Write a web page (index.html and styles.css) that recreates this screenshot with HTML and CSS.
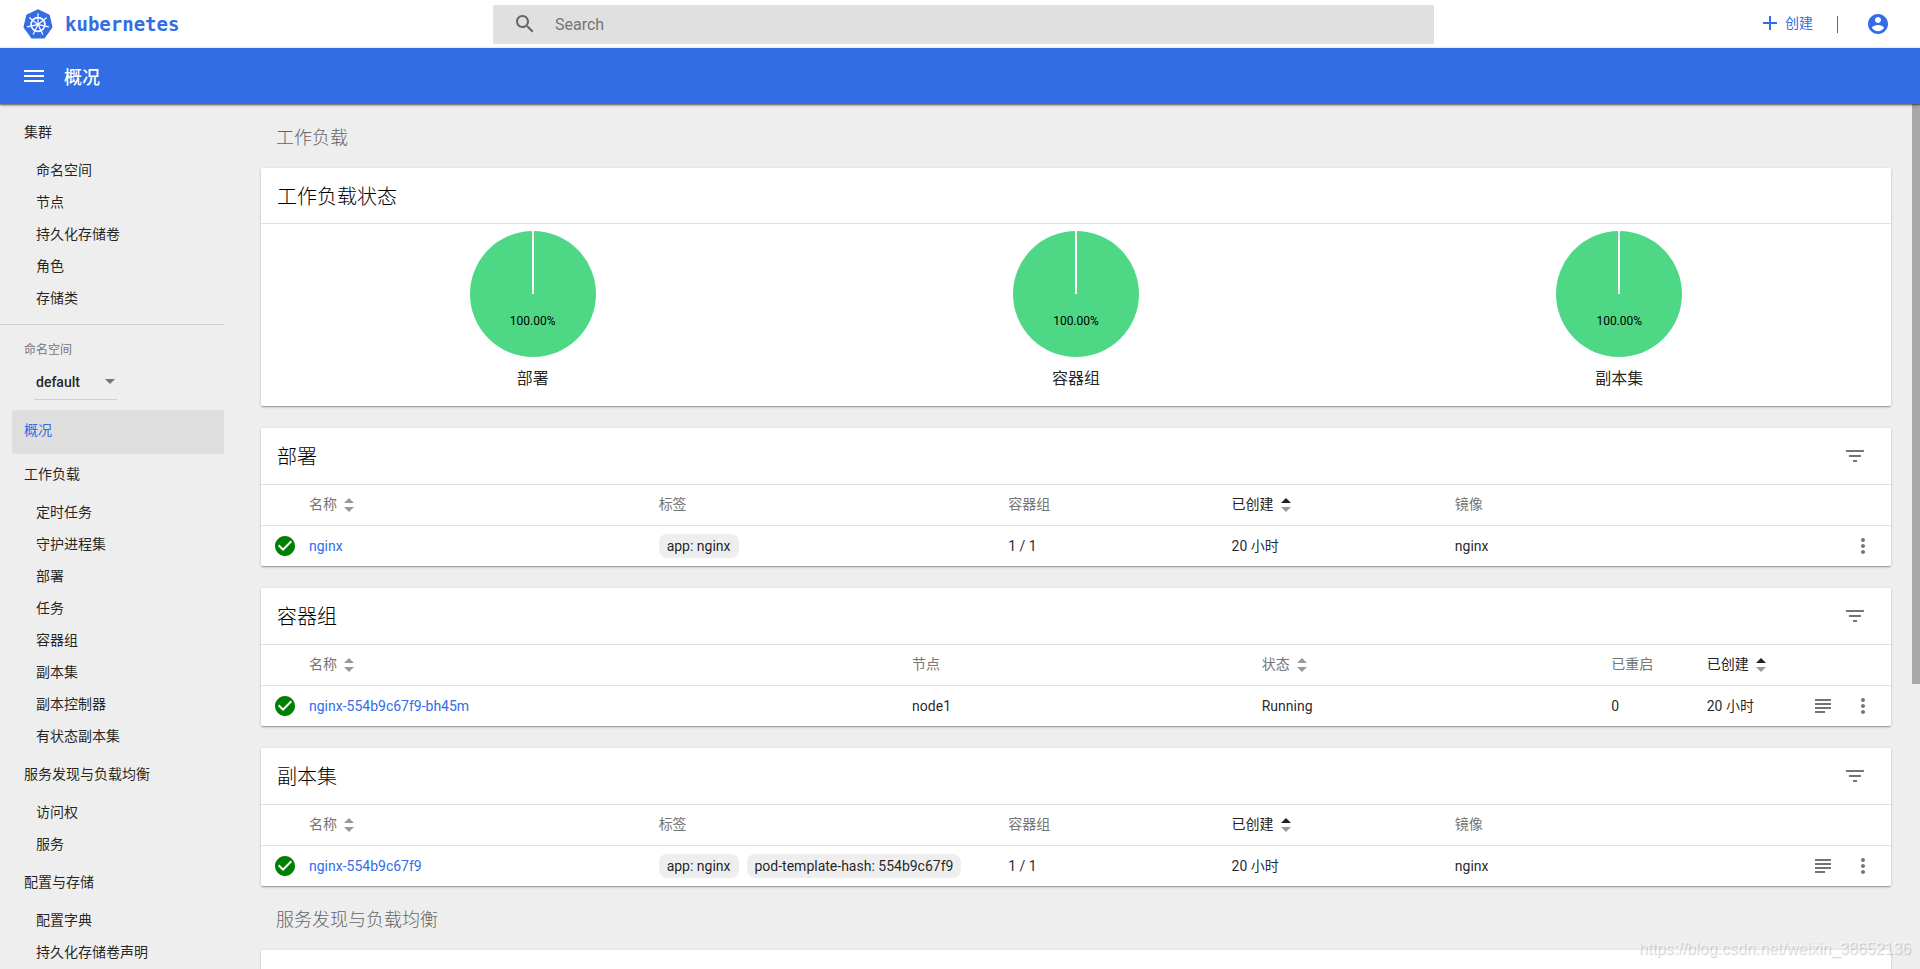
FILE: index.html
```html
<!DOCTYPE html>
<html lang="zh-CN">
<head>
<meta charset="utf-8">
<title>概况 - Kubernetes Dashboard</title>
<link rel="stylesheet" href="styles.css">
</head>
<body>
<svg class="sprite" aria-hidden="true">
  <symbol id="i-check" viewBox="0 0 24 24"><circle cx="12" cy="12" r="8" fill="#fff"/><path d="M12 2C6.480 2 2 6.480 2 12s4.480 10 10 10 10-4.480 10-10S17.520 2 12 2zm-2 15l-5-5 1.410-1.410L10 14.170l7.590-7.590L19 8l-9 9z"/></symbol>
  <symbol id="i-filter" viewBox="0 0 24 24"><path d="M10 18h4v-2h-4v2zM3 6v2h18V6H3zm3 7h12v-2H6v2z"/></symbol>
  <symbol id="i-more" viewBox="0 0 24 24"><path d="M12 8c1.100 0 2-.9 2-2s-.9-2-2-2-2 .9-2 2 .9 2 2 2zm0 2c-1.100 0-2 .9-2 2s.9 2 2 2 2-.9 2-2-.9-2-2-2zm0 6c-1.100 0-2 .9-2 2s.9 2 2 2 2-.9 2-2-.9-2-2-2z"/></symbol>
  <symbol id="i-logs" viewBox="0 0 24 24"><path d="M4 5h16v2H4zM4 9h16v2H4zM4 13h16v2H4zM4 17h10v2H4z"/></symbol>
  <symbol id="i-sort" viewBox="0 0 10 14"><path class="sort-up" d="M0 5L5 0l5 5z"/><path d="M0 9h10l-5 5z"/></symbol>
  <symbol id="i-pie" viewBox="0 0 126 126"><circle cx="63" cy="63" r="63" fill="#4ed886"/><path d="M63 0v63" stroke="#fff" stroke-width="2"/></symbol>
</svg>
<div class="app">
  <header class="topbar">
    <a class="brand" href="#">
      <svg class="brand-logo" viewBox="0 0 30 30" aria-hidden="true">
        <path d="M15 1.500L25.600 6.500 28.300 18 20.900 28.300H9.100L1.700 18 4.400 6.500z" fill="#326de6" stroke="#326de6" stroke-width="2.400" stroke-linejoin="round"/>
        <g fill="none" stroke="#fff" stroke-linecap="round">
          <circle cx="15" cy="15.500" r="6.900" stroke-width="1.700"/>
          <g stroke-width="1.200">
            <path id="spoke" d="M15 13.800V4.700"/>
            <use href="#spoke" transform="rotate(51.430 15 15.500)"/>
            <use href="#spoke" transform="rotate(102.860 15 15.500)"/>
            <use href="#spoke" transform="rotate(154.290 15 15.500)"/>
            <use href="#spoke" transform="rotate(205.710 15 15.500)"/>
            <use href="#spoke" transform="rotate(257.140 15 15.500)"/>
            <use href="#spoke" transform="rotate(308.570 15 15.500)"/>
          </g>
        </g>
        <circle cx="15" cy="15.500" r="1.800" fill="#fff"/>
      </svg>
      <span class="brand-name">kubernetes</span>
    </a>
    <label class="search">
      <svg class="icon" viewBox="0 0 24 24" aria-hidden="true"><path d="M15.500 14h-.79l-.28-.27C15.410 12.590 16 11.110 16 9.500 16 5.910 13.090 3 9.500 3S3 5.910 3 9.500 5.910 16 9.500 16c1.610 0 3.090-.59 4.230-1.570l.27.28v.79l5 4.990L20.490 19l-4.990-5zm-6 0C7.010 14 5 11.990 5 9.500S7.010 5 9.500 5 14 7.010 14 9.500 11.990 14 9.500 14z"/></svg>
      <input class="search-input" type="text" placeholder="Search" aria-label="Search">
    </label>
    <div class="top-actions">
      <button class="create" type="button"><svg viewBox="0 0 14 14" width="14" height="14" aria-hidden="true"><path d="M6 0h2v6h6v2H8v6H6V8H0V6h6z"/></svg>创建</button>
      <span class="top-divider"></span>
      <button class="icon-button account" type="button" aria-label="账户"><svg class="icon" viewBox="0 0 24 24" aria-hidden="true"><path d="M12 2C6.480 2 2 6.480 2 12s4.480 10 10 10 10-4.480 10-10S17.520 2 12 2zm0 3c1.660 0 3 1.340 3 3s-1.340 3-3 3-3-1.340-3-3 1.340-3 3-3zm0 14.200c-2.500 0-4.710-1.280-6-3.220.03-1.990 4-3.080 6-3.080 1.990 0 5.970 1.090 6 3.080-1.290 1.940-3.500 3.220-6 3.220z"/></svg></button>
    </div>
  </header>

  <div class="toolbar">
    <button class="icon-button" type="button" aria-label="菜单"><svg class="menu-icon" viewBox="0 0 20 12" aria-hidden="true"><path d="M0 0h20v2H0zM0 5h20v2H0zM0 10h20v2H0z"/></svg></button>
    <h1 class="page-title">概况</h1>
  </div>

  <div class="body">
    <nav class="sidebar">
      <a class="nav-group" href="#">集群</a>
      <a class="nav-item" href="#">命名空间</a>
      <a class="nav-item" href="#">节点</a>
      <a class="nav-item" href="#">持久化存储卷</a>
      <a class="nav-item" href="#">角色</a>
      <a class="nav-item" href="#">存储类</a>
      <div class="namespace">
        <label class="namespace-label" for="namespace">命名空间</label>
        <div class="select-box">
          <select class="select" id="namespace"><option>default</option></select>
          <svg class="select-arrow" viewBox="0 0 10 5" aria-hidden="true"><path d="M0 0h10L5 5z"/></svg>
        </div>
      </div>
      <a class="nav-group nav-active" href="#">概况</a>
      <a class="nav-group" href="#">工作负载</a>
      <a class="nav-item" href="#">定时任务</a>
      <a class="nav-item" href="#">守护进程集</a>
      <a class="nav-item" href="#">部署</a>
      <a class="nav-item" href="#">任务</a>
      <a class="nav-item" href="#">容器组</a>
      <a class="nav-item" href="#">副本集</a>
      <a class="nav-item" href="#">副本控制器</a>
      <a class="nav-item" href="#">有状态副本集</a>
      <a class="nav-group" href="#">服务发现与负载均衡</a>
      <a class="nav-item" href="#">访问权</a>
      <a class="nav-item" href="#">服务</a>
      <a class="nav-group" href="#">配置与存储</a>
      <a class="nav-item" href="#">配置字典</a>
      <a class="nav-item" href="#">持久化存储卷声明</a>
    </nav>

    <main class="content">
      <h2 class="section-title">工作负载</h2>
      <div class="cards">
        <section class="card">
          <div class="card-head card-head-plain"><h3 class="card-title">工作负载状态</h3></div>
          <div class="charts">
            <figure class="chart"><div class="pie"><svg class="pie-shape" aria-hidden="true"><use href="#i-pie"/></svg><span class="pie-value">100.00%</span></div><figcaption>部署</figcaption></figure>
            <figure class="chart"><div class="pie"><svg class="pie-shape" aria-hidden="true"><use href="#i-pie"/></svg><span class="pie-value">100.00%</span></div><figcaption>容器组</figcaption></figure>
            <figure class="chart"><div class="pie"><svg class="pie-shape" aria-hidden="true"><use href="#i-pie"/></svg><span class="pie-value">100.00%</span></div><figcaption>副本集</figcaption></figure>
          </div>
        </section>

        <section class="card">
          <div class="card-head"><h3 class="card-title">部署</h3><button class="icon-button" type="button" aria-label="筛选"><svg class="icon"><use href="#i-filter"/></svg></button></div>
          <table class="table">
            <colgroup><col class="col-status"><col class="col-l"><col class="col-l"><col class="col-m"><col class="col-m"><col><col class="col-actions"></colgroup>
            <thead><tr><th></th><th>名称<svg class="sort"><use href="#i-sort"/></svg></th><th>标签</th><th>容器组</th><th class="sorted">已创建<svg class="sort"><use href="#i-sort"/></svg></th><th>镜像</th><th></th></tr></thead>
            <tbody><tr><td><svg class="icon status"><use href="#i-check"/></svg></td><td><a class="link" href="#">nginx</a></td><td><span class="chip">app: nginx</span></td><td>1 / 1</td><td>20 小时</td><td>nginx</td><td><div class="row-actions"><button class="icon-button" type="button" aria-label="更多"><svg class="icon"><use href="#i-more"/></svg></button></div></td></tr></tbody>
          </table>
        </section>

        <section class="card">
          <div class="card-head"><h3 class="card-title">容器组</h3><button class="icon-button" type="button" aria-label="筛选"><svg class="icon"><use href="#i-filter"/></svg></button></div>
          <table class="table">
            <colgroup><col class="col-status"><col class="col-xl"><col class="col-l"><col class="col-l"><col class="col-s"><col><col class="col-actions"></colgroup>
            <thead><tr><th></th><th>名称<svg class="sort"><use href="#i-sort"/></svg></th><th>节点</th><th>状态<svg class="sort"><use href="#i-sort"/></svg></th><th>已重启</th><th class="sorted">已创建<svg class="sort"><use href="#i-sort"/></svg></th><th></th></tr></thead>
            <tbody><tr><td><svg class="icon status"><use href="#i-check"/></svg></td><td><a class="link" href="#">nginx-554b9c67f9-bh45m</a></td><td>node1</td><td>Running</td><td>0</td><td>20 小时</td><td><div class="row-actions"><button class="icon-button" type="button" aria-label="日志"><svg class="icon"><use href="#i-logs"/></svg></button><button class="icon-button" type="button" aria-label="更多"><svg class="icon"><use href="#i-more"/></svg></button></div></td></tr></tbody>
          </table>
        </section>

        <section class="card">
          <div class="card-head"><h3 class="card-title">副本集</h3><button class="icon-button" type="button" aria-label="筛选"><svg class="icon"><use href="#i-filter"/></svg></button></div>
          <table class="table">
            <colgroup><col class="col-status"><col class="col-l"><col class="col-l"><col class="col-m"><col class="col-m"><col><col class="col-actions"></colgroup>
            <thead><tr><th></th><th>名称<svg class="sort"><use href="#i-sort"/></svg></th><th>标签</th><th>容器组</th><th class="sorted">已创建<svg class="sort"><use href="#i-sort"/></svg></th><th>镜像</th><th></th></tr></thead>
            <tbody><tr><td><svg class="icon status"><use href="#i-check"/></svg></td><td><a class="link" href="#">nginx-554b9c67f9</a></td><td><span class="chip">app: nginx</span><span class="chip">pod-template-hash: 554b9c67f9</span></td><td>1 / 1</td><td>20 小时</td><td>nginx</td><td><div class="row-actions"><button class="icon-button" type="button" aria-label="日志"><svg class="icon"><use href="#i-logs"/></svg></button><button class="icon-button" type="button" aria-label="更多"><svg class="icon"><use href="#i-more"/></svg></button></div></td></tr></tbody>
          </table>
        </section>
      </div>

      <h2 class="section-title">服务发现与负载均衡</h2>
      <section class="card"><div class="card-head"></div></section>
    </main>
    <div class="scroll-thumb"></div>
  </div>
  <div class="watermark">https://blog.csdn.net/weixin_38652136</div>
</div>
</body>
</html>
```
FILE: styles.css
```css
* { box-sizing: border-box; }

body {
  margin: 0;
  background: #eee;
  color: rgba(0, 0, 0, 0.87);
  font: 14px/20px Roboto, "Noto Sans CJK SC", sans-serif;
}

a { color: inherit; text-decoration: none; }

h1, h2, h3, figure { margin: 0; font-weight: 400; }

button {
  border: 0;
  padding: 0;
  background: none;
  color: inherit;
  font: inherit;
  cursor: pointer;
}

svg { fill: currentColor; flex: none; }

.sprite { position: absolute; width: 0; height: 0; }
.icon { display: block; width: 24px; height: 24px; }
.icon-button { display: flex; align-items: center; justify-content: center; }

.app {
  position: relative;
  display: flex;
  flex-direction: column;
  height: 100vh;
  overflow: hidden;
}

/* Top bar */
.topbar {
  flex: none;
  display: grid;
  grid-template-columns: 493px 49% 1fr;
  align-items: center;
  height: 48px;
  background: #fff;
  color: #326de6;
}

.brand { display: flex; align-items: center; gap: 12px; padding-left: 23px; }
.brand-logo { width: 30px; height: 30px; }
.brand-name { font: 700 19px/24px "DejaVu Sans Mono", monospace; }

.search {
  display: flex;
  align-items: center;
  gap: 18px;
  height: 39px;
  padding-left: 20px;
  border-radius: 2px;
  background: #e0e0e0;
  color: #666;
}

.search-input {
  flex: 1;
  border: 0;
  padding: 2px 0 0;
  outline: 0;
  background: none;
  color: inherit;
  font: 16px/24px Roboto, sans-serif;
}

.search-input::placeholder { color: #757575; }

.top-actions { display: flex; align-items: center; justify-content: flex-end; padding-right: 30px; }
.create { display: flex; align-items: center; gap: 8px; padding-bottom: 2px; }
.top-divider { width: 1px; height: 17px; margin: 0 28px 0 24px; background: #326de6; }

/* Blue toolbar */
.toolbar {
  position: relative;
  z-index: 1;
  flex: none;
  display: flex;
  align-items: center;
  gap: 20px;
  height: 56px;
  padding-left: 24px;
  background: #326de6;
  box-shadow: 0 1px 3px rgba(0, 0, 0, 0.4), 0 1px 1px rgba(0, 0, 0, 0.3);
  color: #fff;
}

.menu-icon { width: 20px; height: 12px; }
.page-title { padding-top: 3px; font-size: 18px; font-weight: 500; line-height: 24px; }

.body { position: relative; flex: 1; display: flex; min-height: 0; }

/* Sidebar */
.sidebar { flex: none; width: 224px; padding-top: 8px; }
.nav-group { display: block; padding: 10px 24px 14px; }
.nav-item { display: block; padding: 4px 36px 8px; }

.nav-active {
  margin-left: 12px;
  padding-left: 12px;
  border-radius: 2px;
  background: #dedede;
  color: #326de6;
}

.namespace {
  height: 86px;
  margin-top: 8px;
  padding: 15px 24px 0;
  border-top: 1px solid #cfcfcf;
}

.namespace-label { display: block; color: #757575; font-size: 12px; line-height: 20px; }

.select-box {
  display: flex;
  align-items: center;
  width: 83px;
  height: 36px;
  margin: 4px 0 0 10px;
  padding: 0 2px;
  border-bottom: 1px solid #cfcfcf;
}

.select {
  flex: 1;
  width: 0;
  border: 0;
  padding: 0;
  appearance: none;
  background: none;
  color: inherit;
  font: 500 14px/20px Roboto, sans-serif;
}

.select-arrow { width: 10px; height: 5px; color: #757575; }

/* Content */
.content { flex: 1; min-width: 0; padding: 0 29px 0 37px; }

.section-title {
  padding: 22px 15px 18px;
  color: #666;
  font-size: 18px;
  font-weight: 300;
  line-height: 24px;
}

.cards { display: flex; flex-direction: column; gap: 22px; }

.card {
  border-radius: 2px;
  background: #fff;
  box-shadow: 0 1px 3px rgba(0, 0, 0, 0.2), 0 1px 1px rgba(0, 0, 0, 0.14), 0 2px 1px -1px rgba(0, 0, 0, 0.12);
}

.card-head {
  display: flex;
  align-items: center;
  justify-content: space-between;
  height: 57px;
  padding: 0 24px 0 16px;
  border-bottom: 1px solid #e0e0e0;
  color: #757575;
}

.card-head-plain { height: 56px; }

.card-title { padding-top: 2px; color: #000; font-size: 20px; font-weight: 300; line-height: 28px; }

.charts { display: grid; grid-template-columns: repeat(3, 1fr); padding: 7px 0 15px; }
.chart { display: flex; flex-direction: column; align-items: center; gap: 10px; font-size: 16px; line-height: 24px; }
.pie { display: grid; place-items: center; }
.pie-shape { grid-area: 1 / 1; width: 126px; height: 126px; }
.pie-value { grid-area: 1 / 1; padding-top: 54px; color: #000; font-size: 12px; line-height: 16px; }

.table { width: 100%; table-layout: fixed; border-spacing: 0; }
.table th, .table td { padding: 0; text-align: left; white-space: nowrap; }
.table th { height: 40px; padding-bottom: 2px; color: #757575; font-weight: 400; }
.table td { height: 41px; border-top: 1px solid #e0e0e0; }
.table .sorted { color: #212121; }

.col-status { width: 48px; }
.col-s { width: 5.85%; }
.col-m { width: 13.7%; }
.col-l { width: 21.45%; }
.col-xl { width: 37%; }
.col-actions { width: 96px; }

.sort { width: 10px; height: 14px; margin-left: 7px; vertical-align: -3px; color: #999; }
.sort-up { fill: var(--sort-up, #999); }
.sorted { --sort-up: #212121; }

.status { margin-left: 12px; color: #008000; }
.link { color: #326de6; }

.chip {
  display: inline-block;
  margin-right: 8px;
  padding: 2px 8px;
  border-radius: 8px;
  background: #eee;
}

.row-actions { display: flex; justify-content: flex-end; gap: 16px; padding-right: 16px; color: #757575; }

/* Overlays */
.scroll-thumb {
  position: absolute;
  top: 0;
  right: 0;
  width: 8px;
  height: 67%;
  background: #a9a9a9;
}

.watermark {
  position: absolute;
  right: 9px;
  bottom: 8px;
  color: rgba(255, 255, 255, 0.6);
  font: 16px/24px "Liberation Sans", sans-serif;
  text-shadow: 1px 1px 1px rgba(0, 0, 0, 0.2);
}
```
